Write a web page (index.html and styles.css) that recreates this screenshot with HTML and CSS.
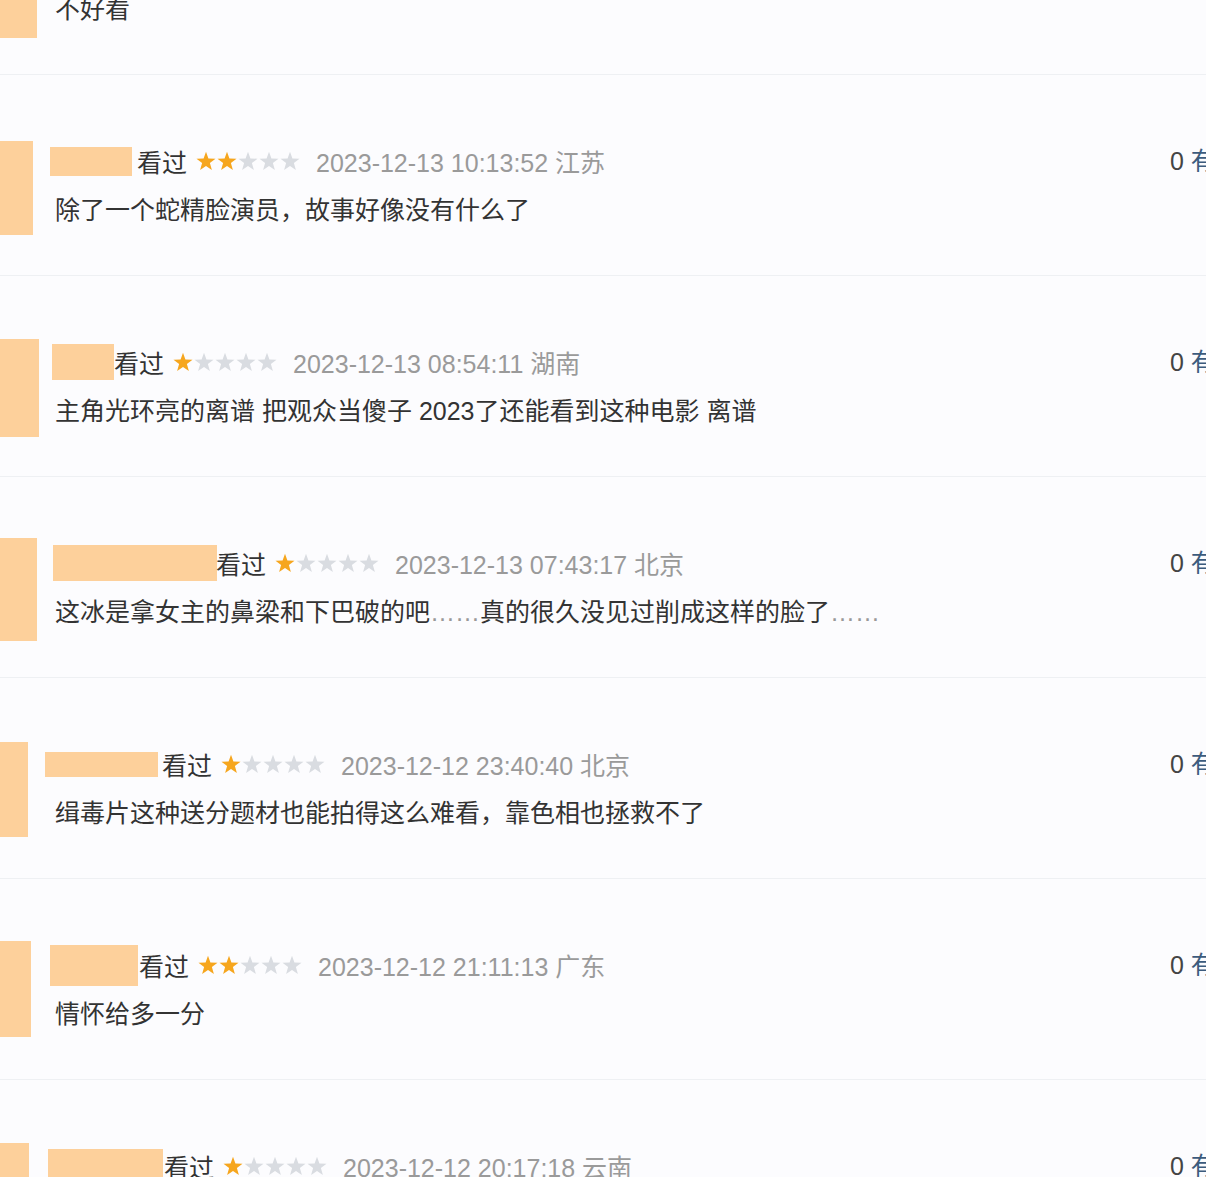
FILE: index.html
```html
<!DOCTYPE html>
<html lang="zh-CN">
<head>
<meta charset="utf-8">
<title>短评</title>
<link rel="stylesheet" href="styles.css">
</head>
<body>
<svg width="0" height="0" class="defs" aria-hidden="true">
  <defs>
    <path id="star" d="M10 .8L12.41 7.48 19.51 7.71 13.9 12.07 15.88 18.89 10 14.9 4.12 18.89 6.1 12.07 .49 7.71 7.59 7.48Z"/>
  </defs>
</svg>
<div class="list">

  <div class="item c0">
    <div class="avatar"></div>
    <div class="body">
      <div class="head"><span class="name"></span></div>
      <p class="text">不好看</p>
    </div>
    <div class="vote"></div>
  </div>

  <div class="item c1">
    <div class="avatar"></div>
    <div class="body">
      <div class="head"><span class="name"></span><span class="status">看过</span>
        <span class="stars"><svg class="on"><use href="#star"/></svg><svg class="on"><use href="#star"/></svg><svg><use href="#star"/></svg><svg><use href="#star"/></svg><svg><use href="#star"/></svg></span>
        <span class="time">2023-12-13 10:13:52 江苏</span></div>
      <p class="text">除了一个蛇精脸演员，故事好像没有什么了</p>
    </div>
    <div class="vote">0 <span class="useful">有用</span></div>
  </div>

  <div class="item c2">
    <div class="avatar"></div>
    <div class="body">
      <div class="head"><span class="name"></span><span class="status">看过</span>
        <span class="stars"><svg class="on"><use href="#star"/></svg><svg><use href="#star"/></svg><svg><use href="#star"/></svg><svg><use href="#star"/></svg><svg><use href="#star"/></svg></span>
        <span class="time">2023-12-13 08:54:11 湖南</span></div>
      <p class="text">主角光环亮的离谱 把观众当傻子 2023了还能看到这种电影 离谱</p>
    </div>
    <div class="vote">0 <span class="useful">有用</span></div>
  </div>

  <div class="item c3">
    <div class="avatar"></div>
    <div class="body">
      <div class="head"><span class="name"></span><span class="status">看过</span>
        <span class="stars"><svg class="on"><use href="#star"/></svg><svg><use href="#star"/></svg><svg><use href="#star"/></svg><svg><use href="#star"/></svg><svg><use href="#star"/></svg></span>
        <span class="time">2023-12-13 07:43:17 北京</span></div>
      <p class="text">这冰是拿女主的鼻梁和下巴破的吧<span class="dots">……</span>真的很久没见过削成这样的脸了<span class="dots">……</span></p>
    </div>
    <div class="vote">0 <span class="useful">有用</span></div>
  </div>

  <div class="item c4">
    <div class="avatar"></div>
    <div class="body">
      <div class="head"><span class="name"></span><span class="status">看过</span>
        <span class="stars"><svg class="on"><use href="#star"/></svg><svg><use href="#star"/></svg><svg><use href="#star"/></svg><svg><use href="#star"/></svg><svg><use href="#star"/></svg></span>
        <span class="time">2023-12-12 23:40:40 北京</span></div>
      <p class="text">缉毒片这种送分题材也能拍得这么难看，靠色相也拯救不了</p>
    </div>
    <div class="vote">0 <span class="useful">有用</span></div>
  </div>

  <div class="item c5">
    <div class="avatar"></div>
    <div class="body">
      <div class="head"><span class="name"></span><span class="status">看过</span>
        <span class="stars"><svg class="on"><use href="#star"/></svg><svg class="on"><use href="#star"/></svg><svg><use href="#star"/></svg><svg><use href="#star"/></svg><svg><use href="#star"/></svg></span>
        <span class="time">2023-12-12 21:11:13 广东</span></div>
      <p class="text">情怀给多一分</p>
    </div>
    <div class="vote">0 <span class="useful">有用</span></div>
  </div>

  <div class="item c6">
    <div class="avatar"></div>
    <div class="body">
      <div class="head"><span class="name"></span><span class="status">看过</span>
        <span class="stars"><svg class="on"><use href="#star"/></svg><svg><use href="#star"/></svg><svg><use href="#star"/></svg><svg><use href="#star"/></svg><svg><use href="#star"/></svg></span>
        <span class="time">2023-12-12 20:17:18 云南</span></div>
      <p class="text">烂片，浪费时间</p>
    </div>
    <div class="vote">0 <span class="useful">有用</span></div>
  </div>

</div>
</body>
</html>
```
FILE: styles.css
```css
html, body {
  margin: 0;
  padding: 0;
  background: #fcfcfe;
  overflow: hidden;
}

body {
  width: 1206px;
  height: 1177px;
  font-family: "Liberation Sans", "Noto Sans CJK SC", sans-serif;
  font-size: 25px;
  color: #333;
}

.defs {
  position: absolute;
  width: 0;
  height: 0;
}

.list {
  margin-top: -126px;
}

.item {
  display: grid;
  grid-template-columns: 55px 1115px 36px;
  align-items: start;
  padding: 62px 0 40px;
  border-bottom: 1px solid #eef0f3;
  height: 98px;
}

.avatar {
  width: var(--aw);
  height: var(--ah);
  margin-top: var(--at);
  background: #fdd09b;
}

.body {
  min-width: 0;
}

.head {
  display: flex;
  align-items: center;
  height: 48px;
  white-space: nowrap;
}

.name {
  display: block;
  flex: none;
  width: var(--nw);
  height: var(--nh);
  margin-left: var(--nl);
  margin-right: var(--nr);
  background: #fdd09b;
}

.status {
  color: #333;
}

.stars {
  display: flex;
  margin-left: 9px;
  margin-right: 15px;
}

.stars svg {
  width: 21px;
  height: 20px;
  fill: #d9dce1;
}

.stars svg.on {
  fill: #f6a61e;
}

.time {
  color: #9a9a9a;
}

.text {
  margin: 0;
  height: 50px;
  line-height: 50px;
  white-space: nowrap;
  color: #333;
}

.dots {
  color: #999;
}

.vote {
  height: 48px;
  line-height: 48px;
  white-space: nowrap;
  color: #444;
}

.useful {
  color: #3c5b7d;
}

.c0 { --aw: 37px; --ah: 103px; --at: -1px; --nw: 90px;  --nh: 30px; --nl: -5px;  --nr: 4px; }
.c1 { --aw: 33px; --ah: 94px;  --at: 4px;  --nw: 82px;  --nh: 29px; --nl: -5px;  --nr: 5px; }
.c2 { --aw: 39px; --ah: 98px;  --at: 1px;  --nw: 62px;  --nh: 36px; --nl: -3px;  --nr: 0px; }
.c3 { --aw: 37px; --ah: 103px; --at: -1px; --nw: 164px; --nh: 36px; --nl: -2px;  --nr: -1px; }
.c4 { --aw: 28px; --ah: 95px;  --at: 2px;  --nw: 113px; --nh: 25px; --nl: -10px; --nr: 4px; }
.c5 { --aw: 31px; --ah: 96px;  --at: 0px;  --nw: 88px;  --nh: 41px; --nl: -5px;  --nr: 1px; }
.c6 { --aw: 29px; --ah: 98px;  --at: 1px;  --nw: 115px; --nh: 34px; --nl: -7px;  --nr: 1px; }
```
